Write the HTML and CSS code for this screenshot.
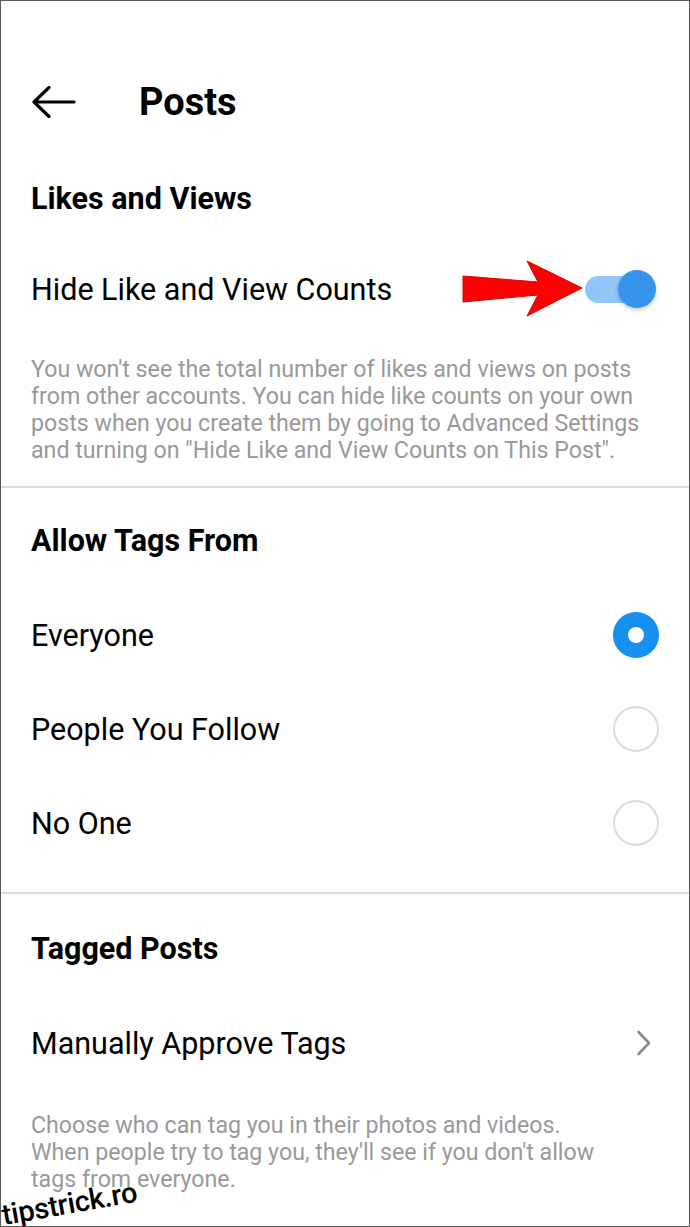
FILE: index.html
```html
<!DOCTYPE html>
<html lang="en">
<head>
    <meta charset="utf-8">
    <title>Posts</title>
    <link rel="stylesheet" href="styles.css">
</head>
<body>
<div class="screen">
    <div class="header">
        <svg class="back" width="44" height="32" viewBox="0 0 44 32">
            <path d="M2 16 H42 M17 1.5 L2 16 L17 30.5" fill="none" stroke="#000" stroke-width="3.2" stroke-linecap="round" stroke-linejoin="round"/>
        </svg>
        <div class="title">Posts</div>
    </div>

    <div class="section">
        <div class="section-title">Likes and Views</div>
        <div class="row row-toggle">
            <span>Hide Like and View Counts</span>
            <div class="toggle on"></div>
        </div>
        <p class="note">You won't see the total number of likes and views on posts from other accounts. You can hide like counts on your own posts when you create them by going to Advanced Settings and turning on "Hide Like and View Counts on This Post".</p>
        <svg class="pointer" width="124" height="60" viewBox="0 0 124 60">
            <polygon points="1,16 76,22 65,1 120,28 65,56 76,35 1,42" fill="#ff0000" stroke="#d80000" stroke-width="1"/>
        </svg>
    </div>

    <div class="divider"></div>

    <div class="section">
        <div class="section-title">Allow Tags From</div>
        <div class="row">
            <span>Everyone</span>
            <div class="radio checked"></div>
        </div>
        <div class="row">
            <span>People You Follow</span>
            <div class="radio"></div>
        </div>
        <div class="row">
            <span>No One</span>
            <div class="radio"></div>
        </div>
        <div class="spacer"></div>
    </div>

    <div class="divider"></div>

    <div class="section section-tagged">
        <div class="section-title">Tagged Posts</div>
        <div class="row row-link">
            <span>Manually Approve Tags</span>
            <svg class="chevron" width="16" height="26" viewBox="0 0 16 26">
                <path d="M2.5 2 L13 13 L2.5 24" fill="none" stroke="#8a8a8a" stroke-width="2.6" stroke-linecap="round" stroke-linejoin="round"/>
            </svg>
        </div>
        <p class="note note-tags">Choose who can tag you in their photos and videos. When people try to tag you, they'll see if you don't allow tags from everyone.</p>
    </div>

    <div class="watermark">tipstrick.ro</div>
</div>
</body>
</html>
```

FILE: styles.css
```css
body {
    margin: 0;
    background: #fff;
    font-family: Roboto, "Liberation Sans", sans-serif;
    color: #000;
}

.screen {
    position: relative;
    width: 690px;
    height: 1227px;
    box-sizing: border-box;
    border: 1px solid #5a5a5a;
    overflow: hidden;
    background: #fff;
}

.header {
    display: flex;
    align-items: center;
    height: 100px;
    padding: 51px 0 0 31px;
}

.header .back {
    display: block;
}

.header .title {
    margin-left: 63px;
    font-size: 38px;
    font-weight: 700;
}

.section {
    position: relative;
    padding: 0 30px;
}

.section-title {
    display: flex;
    align-items: center;
    height: 92px;
    font-size: 30.5px;
    font-weight: 700;
}

.divider + .section .section-title {
    height: 96px;
    padding-top: 4px;
}

.divider + .section-tagged .section-title {
    padding-top: 6px;
}

.row {
    display: flex;
    align-items: center;
    justify-content: space-between;
    height: 94px;
    font-size: 30.5px;
}

.row-toggle {
    height: 90px;
}

.row-link {
    height: 90px;
    margin-top: 2px;
}

.note {
    margin: 0;
    padding: 22px 0;
    font-size: 23.2px;
    line-height: 27px;
    color: #999;
}

.note-tags {
    padding: 24px 44px 0 0;
}

.spacer {
    height: 22px;
}

.divider {
    height: 2px;
    background: #dcdcdc;
}

/* switch */
.toggle {
    position: relative;
    width: 68px;
    height: 27px;
    margin-right: 6px;
    border-radius: 14px;
    background: #92c6f6;
}

.toggle.on::after {
    content: "";
    position: absolute;
    top: -6px;
    right: -3px;
    width: 38px;
    height: 38px;
    border-radius: 50%;
    background: #3794ec;
    box-shadow: 0 2px 4px rgba(0, 0, 0, 0.22);
}

/* radio */
.radio {
    width: 46px;
    height: 46px;
    box-sizing: border-box;
    border: 2px solid #dbdbdb;
    border-radius: 50%;
}

.radio.checked {
    border: 15px solid #1690ef;
    background: #fff;
}

.chevron {
    display: block;
    margin-right: 7px;
}

/* annotation */
.pointer {
    position: absolute;
    left: 461px;
    top: 108px;
}

.watermark {
    position: absolute;
    left: 4px;
    bottom: -6px;
    font-size: 29px;
    font-weight: 500;
    color: #000;
    transform: rotate(-10deg);
    transform-origin: left bottom;
    letter-spacing: -0.3px;
}
```
